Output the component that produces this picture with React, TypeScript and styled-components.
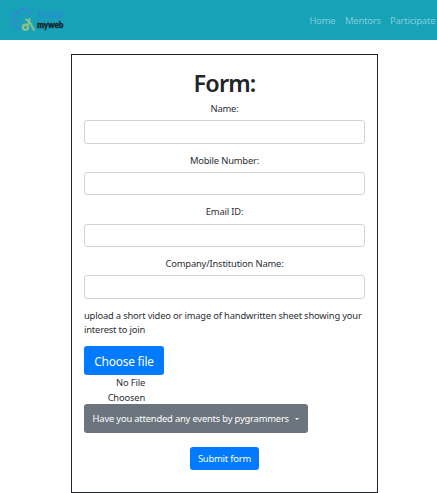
import React from 'react';
import styled, { createGlobalStyle } from 'styled-components';

const GlobalStyle = createGlobalStyle`
  * { box-sizing: border-box; }
  body {
    margin: 0;
    background: #fff;
    color: #2c3034;
    font-family: "Noto Sans", "Open Sans", sans-serif;
    font-size: 9.4px;
    line-height: 14.4px;
    letter-spacing: -0.18px;
    overflow: hidden;
  }
`;

const Page = styled.div`
  width: 437px;
  height: 493px;
  overflow: hidden;
`;

const Navbar = styled.header`
  display: flex;
  align-items: center;
  justify-content: space-between;
  height: 40px;
  padding: 0 2px 0 8px;
  background: #17a2b8;
`;

const Logo = styled.svg`
  display: block;
  width: 58px;
  height: 28px;
  letter-spacing: 0;
`;

const Nav = styled.nav`
  display: flex;
  gap: 9.5px;
  margin-top: 3px;
`;

const NavLink = styled.a<{ $width: number }>`
  width: ${(p) => p.$width}px;
  color: #80cdd9;
  white-space: nowrap;
`;

const Card = styled.form`
  display: flex;
  flex-direction: column;
  align-items: flex-start;
  width: 307px;
  height: 439px;
  margin: 14px 0 0 71px;
  padding: 14px 12px 0;
  border: 1px solid #212529;
`;

const Title = styled.h1`
  align-self: center;
  margin: 0 0 4px;
  color: #212529;
  font-size: 23.4px;
  font-weight: 600;
  line-height: 29px;
  letter-spacing: -0.85px;
`;

const Field = styled.label`
  display: flex;
  flex-direction: column;
  align-items: center;
  gap: 4px;
  width: 281px;
  height: 51.7px;
`;

const Input = styled.input`
  width: 100%;
  height: 23.4px;
  padding: 0 8px;
  border: 1px solid #ced4da;
  border-radius: 3px;
  background: #fff;
  font: inherit;
  outline: none;
`;

const Hint = styled.p`
  margin: 0 0 8px;
  white-space: nowrap;
`;

const Button = styled.button<{ $tone: 'primary' | 'secondary'; $width: number; $height: number; $size?: number }>`
  display: flex;
  align-items: center;
  justify-content: center;
  flex: none;
  gap: 6px;
  width: ${(p) => p.$width}px;
  height: ${(p) => p.$height}px;
  padding: 1px 0 0;
  border: 0;
  border-radius: 3px;
  background: ${(p) => (p.$tone === 'primary' ? '#007bff' : '#6c757d')};
  color: #fff;
  font-family: inherit;
  font-size: ${(p) => p.$size ?? 9.4}px;
  letter-spacing: -0.19px;
  white-space: nowrap;
`;

const FileStatus = styled.div`
  width: 61px;
  height: 29px;
  padding-top: 1.6px;
  text-align: right;
`;

const Caret = styled.span`
  border: 2.5px solid transparent;
  border-top-color: #fff;
  border-bottom: 0;
`;

const SubmitRow = styled.div`
  align-self: center;
  margin-top: 14px;
`;

const fields = ['Name:', 'Mobile Number:', 'Email ID:', 'Company/Institution Name:'];

const BrandLogo = () => (
  <Logo viewBox="0 0 58 28" aria-label="Build myweb">
    <g fill="none" stroke="#2a8fcb">
      <path d="M12 23.5A10.5 10.5 0 1 1 24 7" strokeWidth="2.2" />
      <path d="M14 2c-6 5-6 14-1 20M4 8h17M3 15h13M15 2c4 3 6 7 6 10" strokeWidth="1" />
    </g>
    <text x="29" y="11.5" fill="#268fce" fontFamily="Lato" fontSize="8.5" fontWeight="900" textLength="26" lengthAdjust="spacingAndGlyphs">Build</text>
    <g fill="none" stroke="#8cc08a" strokeLinecap="round">
      <circle cx="17.5" cy="21.3" r="2.6" strokeWidth="2.4" />
      <path d="M20 18.5l1.5-3M18 13.5l2.5 1.5 1-2M21 15l5 9" strokeWidth="2" />
    </g>
    <text x="29" y="21.5" fill="#0b2028" stroke="#0b2028" strokeWidth="0.35" fontFamily="Lato" fontSize="8.8" fontWeight="900" textLength="26.5" lengthAdjust="spacingAndGlyphs">myweb</text>
  </Logo>
);

export default function App() {
  return (
    <Page>
      <GlobalStyle />
      <Navbar>
        <BrandLogo />
        <Nav>
          <NavLink $width={26}>Home</NavLink>
          <NavLink $width={35.5}>Mentors</NavLink>
          <NavLink $width={45}>Participate</NavLink>
        </Nav>
      </Navbar>
      <Card>
        <Title>Form:</Title>
        {fields.map((name) => (
          <Field key={name}>
            {name}
            <Input />
          </Field>
        ))}
        <Hint>
          upload a short video or image of handwritten sheet showing your
          <br />
          interest to join
        </Hint>
        <Button type="button" $tone="primary" $width={80} $height={29} $size={11.9}>
          Choose file
        </Button>
        <FileStatus>
          No File
          <br />
          Choosen
        </FileStatus>
        <Button type="button" $tone="secondary" $width={223.5} $height={29}>
          Have you attended any events by pygrammers
          <Caret />
        </Button>
        <SubmitRow>
          <Button type="button" $tone="primary" $width={69.5} $height={23.5}>
            Submit form
          </Button>
        </SubmitRow>
      </Card>
    </Page>
  );
}
